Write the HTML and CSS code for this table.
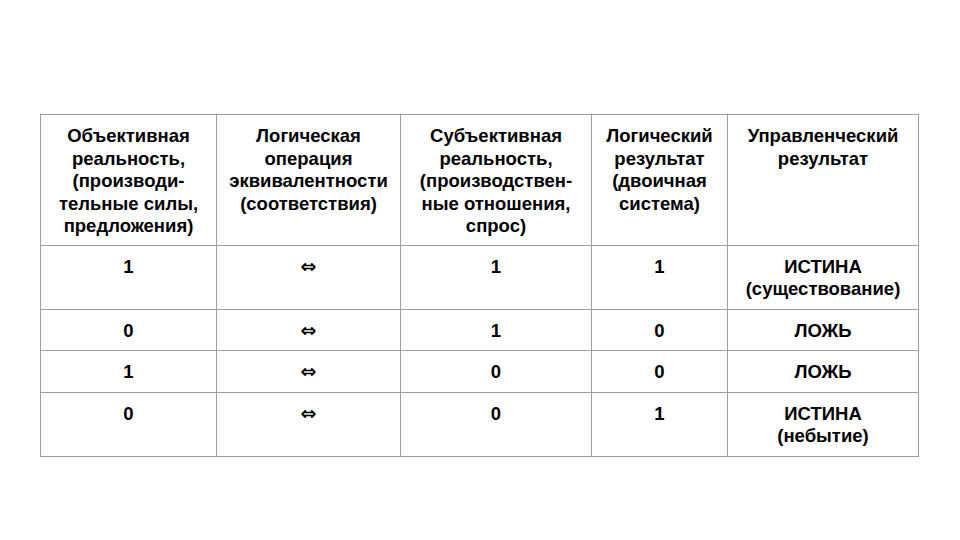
FILE: index.html
```html
<!DOCTYPE html>
<html lang="ru">
<head>
<meta charset="utf-8">
<link rel="stylesheet" href="styles.css">
</head>
<body>
<div class="slide">
  <table class="truth">
    <colgroup>
      <col class="c1"><col class="c2"><col class="c3"><col class="c4"><col class="c5">
    </colgroup>
    <tr class="head">
      <td>Объективная реальность, (производи-тельные силы, предложения)</td>
      <td>Логическая операция эквивалентности (соответствия)</td>
      <td>Субъективная реальность, (производствен-ные отношения, спрос)</td>
      <td>Логический результат (двоичная система)</td>
      <td>Управленческий результат</td>
    </tr>
    <tr>
      <td>1</td><td class="arrow">⇔</td><td>1</td><td>1</td><td>ИСТИНА<br>(существование)</td>
    </tr>
    <tr>
      <td>0</td><td class="arrow">⇔</td><td>1</td><td>0</td><td>ЛОЖЬ</td>
    </tr>
    <tr>
      <td>1</td><td class="arrow">⇔</td><td>0</td><td>0</td><td>ЛОЖЬ</td>
    </tr>
    <tr>
      <td>0</td><td class="arrow">⇔</td><td>0</td><td>1</td><td>ИСТИНА<br>(небытие)</td>
    </tr>
  </table>
</div>
</body>
</html>
```

FILE: styles.css
```css
html, body {
  margin: 0;
  padding: 0;
  background: #ffffff;
}
.slide {
  width: 960px;
  height: 540px;
  box-sizing: border-box;
  padding: 114px 0 0 40px;
}
.truth {
  border-collapse: collapse;
  table-layout: fixed;
  width: 878px;
  font-family: "Liberation Sans", Arial, sans-serif;
  font-weight: bold;
  font-size: 18.5px;
  line-height: 22.5px;
  color: #000;
}
.c1 { width: 176px; }
.c2 { width: 184px; }
.c3 { width: 191px; }
.c4 { width: 136px; }
.c5 { width: 191px; }
.truth td {
  border: 1px solid #9e9e9e;
  text-align: center;
  vertical-align: top;
  padding: 10px 3px 8px 3px;
}
.truth .head td {
  padding-bottom: 7px;
}
.truth .arrow {
  font-family: "DejaVu Sans", sans-serif;
  font-size: 19px;
  line-height: 20px;
  padding-bottom: 10.5px;
}
```
